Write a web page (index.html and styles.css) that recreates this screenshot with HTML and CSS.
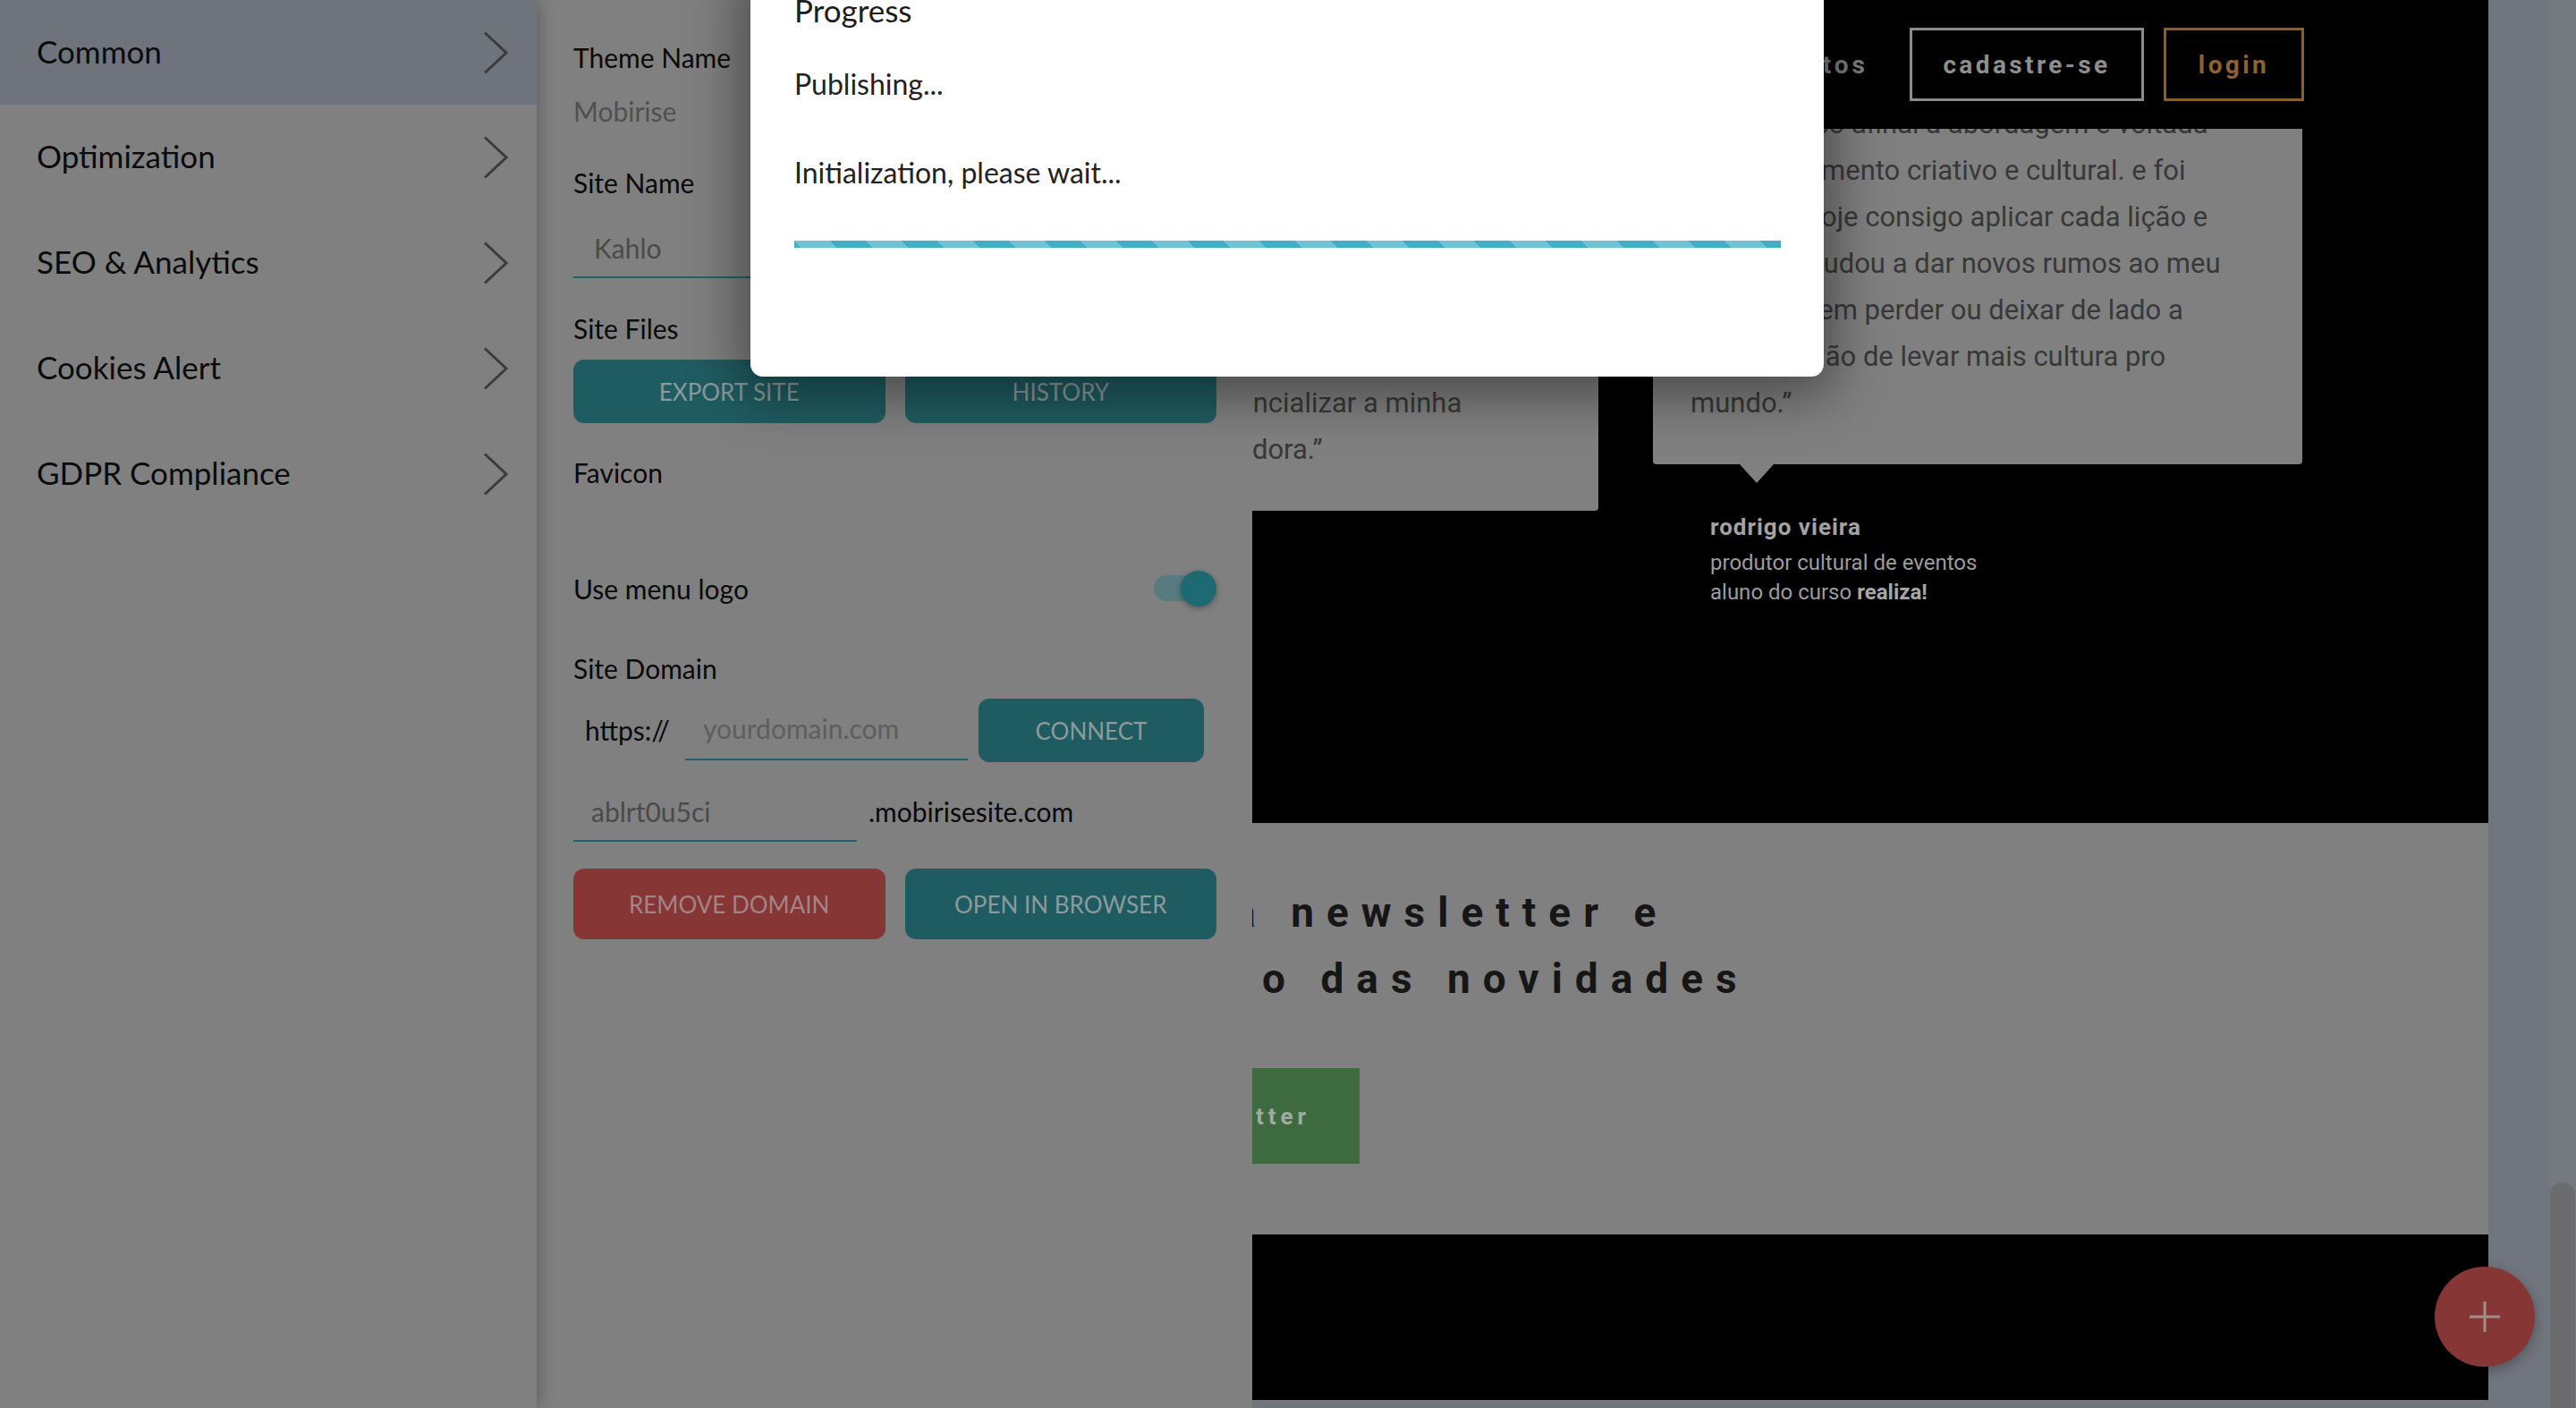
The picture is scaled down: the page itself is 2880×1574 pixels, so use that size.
FILE: index.html
```html
<!DOCTYPE html>
<html lang="en">
<head>
<meta charset="utf-8">
<title>Site Settings – Publishing</title>
<link rel="stylesheet" href="styles.css">
</head>
<body>
<div class="app">
  <aside class="drawer">
    <nav class="sidebar">
      <a class="menu-item menu-item--active">Common
        <svg class="chevron" width="28" height="48" viewBox="0 0 28 48"><polyline points="2,1.5 26,24 2,46.5" fill="none" stroke="#3a3c3f" stroke-width="3"/></svg></a>
      <a class="menu-item">Optimization
        <svg class="chevron" width="28" height="48" viewBox="0 0 28 48"><polyline points="2,1.5 26,24 2,46.5" fill="none" stroke="#3a3c3f" stroke-width="3"/></svg></a>
      <a class="menu-item">SEO &amp; Analytics
        <svg class="chevron" width="28" height="48" viewBox="0 0 28 48"><polyline points="2,1.5 26,24 2,46.5" fill="none" stroke="#3a3c3f" stroke-width="3"/></svg></a>
      <a class="menu-item">Cookies Alert
        <svg class="chevron" width="28" height="48" viewBox="0 0 28 48"><polyline points="2,1.5 26,24 2,46.5" fill="none" stroke="#3a3c3f" stroke-width="3"/></svg></a>
      <a class="menu-item">GDPR Compliance
        <svg class="chevron" width="28" height="48" viewBox="0 0 28 48"><polyline points="2,1.5 26,24 2,46.5" fill="none" stroke="#3a3c3f" stroke-width="3"/></svg></a>
    </nav>

    <section class="panel">
      <div class="label">Theme Name</div>
      <div class="static-value">Mobirise</div>

      <div class="label label--gap-lg">Site Name</div>
      <div class="text-input text-input--full">Kahlo</div>

      <div class="label label--files">Site Files</div>
      <div class="btn-row btn-row--files">
        <button class="btn btn--teal">EXPORT SITE</button>
        <button class="btn btn--teal">HISTORY</button>
      </div>

      <div class="label label--favicon">Favicon</div>

      <div class="toggle-row">
        <span>Use menu logo</span>
        <span class="switch"><span class="switch__track"></span><span class="switch__knob"></span></span>
      </div>

      <div class="label label--domain">Site Domain</div>
      <div class="domain-row">
        <span class="domain-row__prefix">https://</span>
        <span class="text-input text-input--domain">yourdomain.com</span>
        <button class="btn btn--teal btn--connect">CONNECT</button>
      </div>
      <div class="subdomain-row">
        <span class="text-input text-input--sub">ablrt0u5ci</span>
        <span class="subdomain-row__suffix">.mobirisesite.com</span>
      </div>
      <div class="btn-row btn-row--domain">
        <button class="btn btn--red">REMOVE DOMAIN</button>
        <button class="btn btn--teal">OPEN IN BROWSER</button>
      </div>
    </section>
  </aside>

  <main class="preview">
    <header class="site-header">
      <nav class="site-nav">
        <a class="site-nav__link">cursos</a>
        <a class="site-nav__link">eventos</a>
      </nav>
      <a class="site-btn site-btn--light">cadastre-se</a>
      <a class="site-btn site-btn--gold">login</a>
    </header>

    <section class="testimonials">
      <figure class="testimonial">
        <blockquote class="testimonial__card">
          <span class="tline">“o curso me deu uma visão muito</span>
          <span class="tline">mais ampla sobre produção e</span>
          <span class="tline">gestão de projetos culturais, e</span>
          <span class="tline">me mostrou caminhos que eu</span>
          <span class="tline">nunca tinha imaginado. foi o</span>
          <span class="tline">passo que faltava e tudo isso</span>
          <span class="tline">que me ajudou a potencializar a minha</span>
          <span class="tline">voz como empreendedora.”</span>
        </blockquote>
      </figure>
      <figure class="testimonial">
        <blockquote class="testimonial__card">
          <span class="tline">amo o curso afinal a abordagem e voltada</span>
          <span class="tline">desenvolvimento criativo e cultural. e foi</span>
          <span class="tline">tudo que hoje consigo aplicar cada lição e</span>
          <span class="tline">e que os ajudou a dar novos rumos ao meu</span>
          <span class="tline">trabalho, sem perder ou deixar de lado a</span>
          <span class="tline">minha paixão de levar mais cultura pro</span>
          <span class="tline">mundo.”</span>
        </blockquote>
        <figcaption class="author">
          <div class="author__name">rodrigo vieira</div>
          <div class="author__role">produtor cultural de eventos</div>
          <div class="author__role">aluno do curso <b>realiza!</b></div>
        </figcaption>
      </figure>
    </section>

    <section class="newsletter">
      <h2 class="newsletter__title">
        <span class="newsletter__line newsletter__line--first">assine nossa newsletter e</span>
        <span class="newsletter__line newsletter__line--second">fique por dentro das novidades</span>
      </h2>
      <a class="newsletter__btn">assinar newsletter</a>
    </section>

    <footer class="site-footer"></footer>
  </main>

  <div class="gutter">
    <div class="scrollbar"><div class="scrollbar__thumb"></div></div>
  </div>

  <button class="fab" aria-label="Add block">
    <svg width="38" height="38" viewBox="0 0 38 38"><path d="M19 2v34M2 19h34" stroke="#a28c8c" stroke-width="3" fill="none"/></svg>
  </button>

  <div class="modal" role="dialog">
    <h3 class="modal__title">Progress</h3>
    <p class="modal__status">Publishing...</p>
    <p class="modal__detail">Initialization, please wait...</p>
    <div class="progress"></div>
  </div>
</div>
</body>
</html>
```

FILE: styles.css
```css
* { box-sizing: border-box; }

body {
  margin: 0;
  width: 2880px;
  height: 1574px;
  overflow: hidden;
  font-family: Lato, "Noto Sans", sans-serif;
}

a { text-decoration: none; color: inherit; }

.app {
  position: relative;
  display: flex;
  width: 2880px;
  height: 1574px;
  background: #71757e;
}

/* ---------- drawer (sidebar + settings panel) ---------- */
.drawer {
  flex: none;
  display: flex;
  height: 100%;
  position: relative;
  z-index: 5;
}

.sidebar {
  position: relative;
  z-index: 1;
  width: 600px;
  background: #808080;
  box-shadow: 4px 0 16px rgba(0, 0, 0, .22);
}

.menu-item {
  display: flex;
  align-items: center;
  justify-content: space-between;
  height: 118px;
  padding: 0 32px 4px 41px;
  font-size: 35px;
  color: #0b0b0b;
}

.menu-item .chevron { margin-top: 4px; }

.menu-item--active {
  height: 117px;
  background: #6e737c;
}

.chevron { flex: none; }

.panel {
  width: 800px;
  padding: 44px 40px 0 41px;
  background: #808080;
  font-size: 30px;
  color: #0a0a0a;
}

.label { line-height: 40px; }
.label--gap-lg { margin-top: 40px; }
.label--files { margin-top: 36px; }
.label--favicon { margin-top: 35px; }
.label--domain { margin-top: 49px; }

.static-value {
  margin-top: 20px;
  line-height: 40px;
  color: #505050;
}

.text-input {
  display: block;
  border-bottom: 2px solid #1f6469;
  color: #4a4a4a;
  white-space: nowrap;
}

.text-input--full {
  margin-top: 21px;
  height: 66px;
  line-height: 64px;
  padding-left: 23px;
}

.text-input--domain {
  width: 316px;
  height: 69px;
  line-height: 67px;
  padding-left: 20px;
  color: #5e5e5e;
}

.text-input--sub {
  width: 317px;
  height: 66px;
  line-height: 64px;
  padding-left: 20px;
}

.btn-row {
  display: grid;
  grid-template-columns: 1fr 1fr;
  gap: 22px;
}

.btn-row--files { margin-top: 15px; }
.btn-row--files .btn { height: 71px; }

.btn-row--domain { margin-top: 30px; }
.btn-row--domain .btn { height: 79px; }

.btn {
  border: 0;
  border-radius: 12px;
  font-family: Lato, "Noto Sans", sans-serif;
  font-size: 26px;
  text-transform: uppercase;
  padding: 0;
}

.btn--teal {
  background: #1f5c61;
  color: #8b9b9c;
}

.btn--red {
  background: #873636;
  color: #a38484;
}

.toggle-row {
  display: flex;
  align-items: center;
  justify-content: space-between;
  height: 40px;
  margin-top: 90px;
}

.switch {
  position: relative;
  width: 70px;
  height: 40px;
}

.switch__track {
  position: absolute;
  left: 0;
  top: 5px;
  width: 60px;
  height: 29px;
  border-radius: 15px;
  background: #587b80;
}

.switch__knob {
  position: absolute;
  right: 0;
  top: 0;
  width: 40px;
  height: 40px;
  border-radius: 50%;
  background: #1d6a73;
  box-shadow: 0 2px 6px rgba(0, 0, 0, .35);
}

.domain-row {
  display: flex;
  align-items: flex-start;
  height: 71px;
  margin-top: 14px;
}

.domain-row__prefix {
  width: 125px;
  padding-left: 13px;
  line-height: 71px;
}

.btn--connect {
  width: 252px;
  height: 71px;
  margin-left: 12px;
}

.subdomain-row {
  display: flex;
  align-items: flex-start;
  margin-top: 23px;
}

.subdomain-row__suffix {
  margin-left: 13px;
  line-height: 64px;
  color: #0a0a0a;
}

/* ---------- page preview ---------- */
.preview {
  position: relative;
  flex: none;
  width: 1382px;
  height: 1565px;
  background: #000;
  overflow: hidden;
  font-family: Roboto, "Liberation Sans", sans-serif;
}

.gutter {
  flex: 1;
  display: flex;
  justify-content: flex-end;
}

.scrollbar {
  width: 30px;
  height: 100%;
  padding-top: 1322px;
  background: #74787f;
}

.scrollbar__thumb {
  width: 28px;
  height: 320px;
  margin-left: 1px;
  border-radius: 14px;
  background: #6a6b6c;
}

/* site header (fixed navbar over the page) */
.site-header {
  position: absolute;
  top: 0;
  left: 0;
  right: 0;
  height: 144px;
  background: #000;
  display: flex;
  align-items: center;
  justify-content: flex-end;
  padding-right: 206px;
  z-index: 2;
}

.site-nav {
  display: flex;
  gap: 60px;
  margin-right: 46px;
}

.site-nav__link {
  font-weight: 700;
  font-size: 28px;
  letter-spacing: 4px;
  color: #7d7d7d;
}

.site-btn {
  display: flex;
  align-items: center;
  justify-content: center;
  height: 82px;
  border: 3px solid;
  font-weight: 700;
  font-size: 28px;
  letter-spacing: 3.4px;
}

.site-btn--light {
  width: 262px;
  border-color: #8c8c8c;
  color: #8e8e8e;
}

.site-btn--gold {
  width: 157px;
  margin-left: 22px;
  border-color: #8b5f2a;
  color: #8e6232;
}

/* testimonials */
.testimonials {
  display: flex;
  justify-content: flex-end;
  align-items: flex-start;
  gap: 61px;
  height: 920px;
  padding: 60px 208px 0 0;
}

.testimonial {
  flex: none;
  width: 726px;
  margin: 0;
}

.testimonial__card {
  position: relative;
  margin: 0;
  padding: 53px 42px 42px;
  background: #808080;
  border-radius: 4px;
  font-size: 31px;
  line-height: 52px;
  color: #383838;
}

.testimonial__card::after {
  content: "";
  position: absolute;
  top: 100%;
  left: 97px;
  border-left: 19px solid transparent;
  border-right: 19px solid transparent;
  border-top: 21px solid #808080;
}

.tline {
  display: block;
  white-space: nowrap;
}

.author {
  margin-top: 53px;
  padding-left: 64px;
}

.author__name {
  font-weight: 700;
  font-size: 26px;
  line-height: 34px;
  letter-spacing: 1px;
  color: #a3a3a3;
  margin-bottom: 7px;
}

.author__role {
  font-size: 24px;
  line-height: 33px;
  color: #9c9c9c;
}

.author__role b { color: #a6a6a6; }

/* newsletter */
.newsletter {
  height: 460px;
  padding-top: 63px;
  background: #808080;
}

.newsletter__title {
  margin: 0;
  font-weight: 700;
  font-size: 46px;
  line-height: 74px;
  letter-spacing: 14px;
  color: #161616;
}

.newsletter__line {
  display: block;
  white-space: nowrap;
}

.newsletter__line--first { margin-left: -420px; }
.newsletter__line--second { margin-left: -504px; }

.newsletter__btn {
  display: inline-flex;
  align-items: center;
  height: 107px;
  margin: 63px 0 0 -295px;
  padding: 0 55px;
  background: #3e6a40;
  color: #a3aaa3;
  font-weight: 700;
  font-size: 26px;
  letter-spacing: 5px;
}

.site-footer {
  height: 185px;
  background: #000;
}

/* floating action button */
.fab {
  position: absolute;
  left: 2722px;
  top: 1416px;
  width: 112px;
  height: 112px;
  padding: 0;
  border: 0;
  border-radius: 50%;
  background: #873636;
  box-shadow: 0 4px 14px rgba(0, 0, 0, .3);
  display: flex;
  align-items: center;
  justify-content: center;
  z-index: 3;
}

/* ---------- progress modal ---------- */
.modal {
  position: absolute;
  left: 839px;
  top: -40px;
  width: 1200px;
  height: 461px;
  padding: 25.5px 48px 0 49px;
  background: #fff;
  border-radius: 14px;
  box-shadow: 0 10px 60px 12px rgba(0, 0, 0, .42);
  z-index: 10;
  color: #222;
}

.modal__title {
  margin: 0;
  font-size: 35px;
  line-height: 50px;
  font-weight: 400;
  color: #1c1c1c;
}

.modal__status,
.modal__detail {
  margin: 0;
  font-size: 32px;
  line-height: 40px;
}

.modal__status { margin-top: 38px; }
.modal__detail { margin-top: 59px; }

.progress {
  height: 8px;
  margin-top: 56.5px;
  background-color: #3db1c1;
  background-image: linear-gradient(45deg,
    rgba(255, 255, 255, .25) 25%, transparent 25%,
    transparent 50%, rgba(255, 255, 255, .25) 50%,
    rgba(255, 255, 255, .25) 75%, transparent 75%, transparent);
  background-size: 80px 80px;
}
```
